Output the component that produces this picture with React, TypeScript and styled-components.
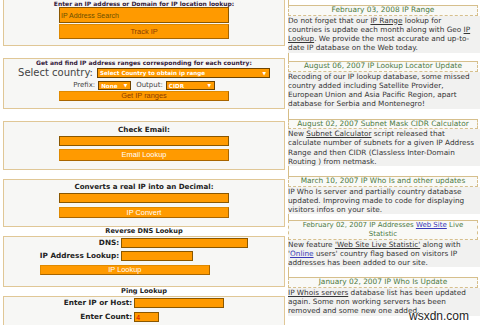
import React from 'react';
import styled, { createGlobalStyle } from 'styled-components';

const GlobalStyle = createGlobalStyle`
  html, body {
    margin: 0;
    padding: 0;
    background: #ffffff;
    overflow: hidden;
  }
  body {
    width: 480px;
    height: 325px;
    font-family: "DejaVu Sans", Verdana, sans-serif;
  }
`;

const Page = styled.div`
  position: relative;
  display: grid;
  grid-template-columns: 288px 192px;
  height: 325px;
  overflow: hidden;
`;

const LeftColumn = styled.div`
  display: flex;
  flex-direction: column;
  padding: 0 3px;
`;

const Box = styled.div<{ $mt?: number; $pt?: number; $pb?: number; $open?: boolean }>`
  display: flex;
  flex-direction: column;
  align-items: center;
  flex-shrink: 0;
  margin-top: ${p => p.$mt ?? 0}px;
  padding: ${p => p.$pt ?? 0}px 0 ${p => p.$pb ?? 0}px;
  background: #f7f7f5;
  border: 1px solid #e0c796;
  ${p => (p.$open ? 'border-top: none;' : '')}
`;

const Title = styled.div<{ $size: number; $lh: number; $color?: string }>`
  font-weight: bold;
  font-size: ${p => p.$size}px;
  line-height: ${p => p.$lh}px;
  color: ${p => p.$color ?? '#222'};
  text-align: center;
  white-space: nowrap;
`;

const SectionTitle = styled.div`
  font-weight: bold;
  font-size: 6.6px;
  line-height: 9px;
  color: #222;
  text-align: center;
  flex-shrink: 0;
`;

const OrangeInput = styled.input<{ $w: number; $h: number; $mt?: number; $red?: boolean }>`
  box-sizing: border-box;
  width: ${p => p.$w}px;
  height: ${p => p.$h}px;
  margin: ${p => p.$mt ?? 0}px 0 0;
  padding: 0 1px;
  background: #ff9a00;
  border: 1px solid #8a5700;
  outline: none;
  font-family: "Liberation Sans", Arial, sans-serif;
  font-size: 7px;
  color: ${p => (p.$red ? '#d40000' : '#6b4f00')};
`;

const OrangeButton = styled.button<{ $h: number; $mt?: number; $dark?: boolean }>`
  box-sizing: border-box;
  width: 170px;
  height: ${p => p.$h}px;
  margin: ${p => p.$mt ?? 0}px 0 0;
  padding: 0;
  background: #ff9a00;
  border: 1px solid #e08a00;
  border-right-color: #a86500;
  border-bottom-color: #a86500;
  font-family: "Liberation Sans", Arial, sans-serif;
  font-size: 7.4px;
  line-height: 1;
  color: ${p => (p.$dark ? '#8a3c00' : '#ffffff')};
  cursor: pointer;
`;

const CountryRow = styled.div`
  display: flex;
  align-items: center;
  gap: 4px;
  height: 12px;
  margin-top: 1px;
`;

const BigLabel = styled.span`
  font-size: 10px;
  line-height: 12px;
  color: #444;
`;

const OptionRow = styled.div`
  display: flex;
  align-items: center;
  gap: 3px;
  height: 9px;
  margin-top: 2px;
`;

const SmallLabel = styled.span<{ $ml?: number }>`
  font-size: 7px;
  line-height: 9px;
  color: #444;
  margin-left: ${p => p.$ml ?? 0}px;
`;

const FakeSelect = styled.div<{ $w: number; $h: number }>`
  box-sizing: border-box;
  display: flex;
  align-items: center;
  justify-content: space-between;
  width: ${p => p.$w}px;
  height: ${p => p.$h}px;
  padding: 0 3px 0 2px;
  background: #ff9a00;
  border: 1px solid #6e4400;
  color: #ffffff;
  font-weight: bold;
  font-size: 5.6px;
  white-space: nowrap;
  overflow: hidden;
`;

const Arrow = styled.span`
  font-size: 4.5px;
  color: #ffffff;
`;

const FormGrid = styled.div<{ $gap: number }>`
  display: grid;
  grid-template-columns: auto auto;
  column-gap: 2px;
  row-gap: ${p => p.$gap}px;
  align-items: center;
`;

const FieldLabel = styled.label`
  font-weight: bold;
  font-size: 7.3px;
  line-height: 10px;
  color: #222;
  text-align: right;
  white-space: nowrap;
`;

const GridButton = styled(OrangeButton)`
  grid-column: 1 / -1;
  justify-self: start;
`;

const RightColumn = styled.div`
  display: flex;
  flex-direction: column;
`;

const Spacer = styled.div<{ $h: number }>`
  flex-shrink: 0;
  height: ${p => p.$h}px;
  border-left: 1px solid #d6bd86;
`;

const NewsHeader = styled.div<{ $tight?: boolean }>`
  flex-shrink: 0;
  margin-right: 2px;
  padding: 0 1px;
  background: #f9f9f6;
  border: 1px dashed #d6bf8c;
  border-top: 1px solid #d6bf8c;
  font-size: ${p => (p.$tight ? '7px' : '7.4px')};
  line-height: 8.7px;
  color: #4d7a44;
  text-align: center;
`;

const NewsBody = styled.div`
  flex-shrink: 0;
  padding: 0 4px 0 0;
  background: #f1f1f0;
  font-size: 7.3px;
  line-height: 9.2px;
  color: #363636;
`;

const Link = styled.a<{ $blue?: boolean }>`
  color: ${p => (p.$blue ? '#3838b8' : '#363636')};
  text-decoration: underline;
`;

const Watermark = styled.div`
  position: absolute;
  right: 11px;
  bottom: 2px;
  font-family: "Liberation Sans", Arial, sans-serif;
  font-size: 12px;
  color: #1e1e1e;
  text-shadow: 0 0 2px #fff, 0 0 2px #fff;
`;

const news = [
  {
    gap: 5,
    title: <>February 03, 2008 IP Range</>,
    body: (
      <>
        Do not forget that our <Link href="#">IP Range</Link> lookup for countries is update each
        month along with Geo <Link href="#">IP Lookup</Link>. We provide the most accurate and
        up-to-date IP database on the Web today.
      </>
    ),
  },
  {
    gap: 8.5,
    title: <>August 06, 2007 IP Lookup Locator Update</>,
    body: (
      <>
        Recoding of our IP lookup database, some missed country added including Satellite
        Provider, European Union and Asia Pacific Region, apart database for Serbia and Montenegro!
      </>
    ),
  },
  {
    gap: 10,
    title: <>August 02, 2007 Subnet Mask CIDR Calculator</>,
    body: (
      <>
        New <Link href="#">Subnet Calculator</Link> script released that calculate number of
        subnets for a given IP Address Range and then CIDR (Classless Inter-Domain Routing ) from
        netmask.
      </>
    ),
  },
  {
    gap: 10,
    title: <>March 10, 2007 IP Who Is and other updates</>,
    body: (
      <>
        IP Who Is server and partially country database updated. Improving made to code for
        displaying visitors infos on your site.
      </>
    ),
  },
  {
    gap: 6,
    tight: true,
    title: (
      <>
        February 02, 2007 IP Addresses <Link href="#" $blue>Web Site</Link> Live
        <br />
        Statistic
      </>
    ),
    body: (
      <>
        New feature <Link href="#">'Web Site Live Statistic'</Link> along with '
        <Link href="#" $blue>Online</Link> users' country flag based on visitors IP addresses has
        been added to our site.
      </>
    ),
  },
  {
    gap: 10,
    title: <>January 02, 2007 IP Who Is Update</>,
    body: (
      <>
        <Link href="#">IP Whois servers</Link> database list has been updated again. Some non
        working servers has been removed and some new one added.
      </>
    ),
  },
];

export default function App() {
  return (
    <>
      <GlobalStyle />
      <Page>
        <LeftColumn>
          <Box $open $pb={6}>
            <Title $size={6} $lh={7} $color="#33203a">
              Enter an IP address or Domain for IP location lookup:
            </Title>
            <OrangeInput $w={170} $h={16} defaultValue="IP Address Search" />
            <OrangeButton $h={15} $mt={1} $dark>
              Track IP
            </OrangeButton>
          </Box>

          <Box $mt={12} $pb={7}>
            <Title $size={6} $lh={7} $color="#33203a">
              Get and find IP address ranges corresponding for each country:
            </Title>
            <CountryRow>
              <BigLabel>Select country:</BigLabel>
              <FakeSelect $w={173} $h={10}>
                Select Country to obtain ip range <Arrow>▼</Arrow>
              </FakeSelect>
            </CountryRow>
            <OptionRow>
              <SmallLabel>Prefix:</SmallLabel>
              <FakeSelect $w={33} $h={9}>
                None <Arrow>▼</Arrow>
              </FakeSelect>
              <SmallLabel $ml={2}>Output:</SmallLabel>
              <FakeSelect $w={49} $h={9}>
                CIDR <Arrow>▼</Arrow>
              </FakeSelect>
            </OptionRow>
            <OrangeButton $h={10} $mt={1} $dark>
              Get IP ranges
            </OrangeButton>
          </Box>

          <Box $mt={12} $pt={3} $pb={8}>
            <Title $size={7.2} $lh={9}>
              Check Email:
            </Title>
            <OrangeInput $w={170} $h={10} $mt={2} />
            <OrangeButton $h={12} $mt={3}>
              Email Lookup
            </OrangeButton>
          </Box>

          <Box $mt={9} $pt={2} $pb={8}>
            <Title $size={7.1} $lh={9}>
              Converts a real IP into an Decimal:
            </Title>
            <OrangeInput $w={170} $h={10} $mt={2} />
            <OrangeButton $h={11} $mt={4}>
              IP Convert
            </OrangeButton>
          </Box>

          <SectionTitle>Reverse DNS Lookup</SectionTitle>
          <Box $pt={1} $pb={11}>
            <FormGrid $gap={3}>
              <FieldLabel>DNS:</FieldLabel>
              <OrangeInput $w={127} $h={10} />
              <FieldLabel>IP Address Lookup:</FieldLabel>
              <OrangeInput $w={72} $h={10} />
              <GridButton $h={10} $mt={1}>
                IP Lookup
              </GridButton>
            </FormGrid>
          </Box>

          <SectionTitle>Ping Lookup</SectionTitle>
          <Box $pt={1} $pb={8}>
            <FormGrid $gap={4}>
              <FieldLabel>Enter IP or Host:</FieldLabel>
              <OrangeInput $w={90} $h={10} />
              <FieldLabel>Enter Count:</FieldLabel>
              <OrangeInput $w={25} $h={10} $red defaultValue="4" />
            </FormGrid>
          </Box>
        </LeftColumn>

        <RightColumn>
          {news.map((item, i) => (
            <React.Fragment key={i}>
              <Spacer $h={item.gap} />
              <NewsHeader $tight={item.tight}>{item.title}</NewsHeader>
              <NewsBody>{item.body}</NewsBody>
            </React.Fragment>
          ))}
        </RightColumn>

        <Watermark>wsxdn.com</Watermark>
      </Page>
    </>
  );
}
